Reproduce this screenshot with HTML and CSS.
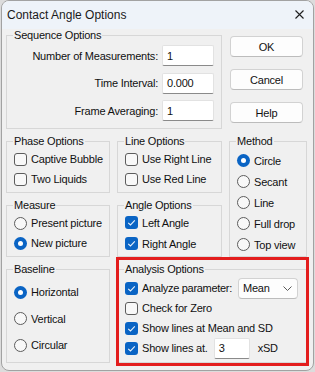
FILE: index.html
```html
<!DOCTYPE html>
<html>
<head>
<meta charset="utf-8">
<link rel="stylesheet" href="styles.css">
</head>
<body>
<div class="window">
  <div class="titlebar">
    <span class="title">Contact Angle Options</span>
    <svg class="close" width="9" height="9" viewBox="0 0 9 9"><path d="M0.5 0.5 L8.5 8.5 M8.5 0.5 L0.5 8.5" stroke="#1f1f1f" stroke-width="1.1" fill="none"/></svg>
  </div>
  <div class="client">
    <div class="group seq">
      <span class="legend">Sequence Options</span>
      <div class="rows seq-rows">
        <div class="field"><span class="flabel">Number of Measurements:</span><span class="edit">1</span></div>
        <div class="field"><span class="flabel">Time Interval:</span><span class="edit">0.000</span></div>
        <div class="field"><span class="flabel">Frame Averaging:</span><span class="edit">1</span></div>
      </div>
    </div>
    <div class="buttons">
      <div class="btn">OK</div>
      <div class="btn">Cancel</div>
      <div class="btn">Help</div>
    </div>
    <div class="group phase">
      <span class="legend">Phase Options</span>
      <div class="rows r20 m2">
        <div class="row"><span class="cb"></span>Captive Bubble</div>
        <div class="row"><span class="cb"></span>Two Liquids</div>
      </div>
    </div>
    <div class="group line">
      <span class="legend">Line Options</span>
      <div class="rows r20 m2">
        <div class="row"><span class="cb"></span>Use Right Line</div>
        <div class="row"><span class="cb"></span>Use Red Line</div>
      </div>
    </div>
    <div class="group method">
      <span class="legend">Method</span>
      <div class="rows r21 m3">
        <div class="row"><span class="rb on"></span>Circle</div>
        <div class="row"><span class="rb"></span>Secant</div>
        <div class="row"><span class="rb"></span>Line</div>
        <div class="row"><span class="rb"></span>Full drop</div>
        <div class="row"><span class="rb"></span>Top view</div>
      </div>
    </div>
    <div class="group measure">
      <span class="legend">Measure</span>
      <div class="rows r20 m2">
        <div class="row"><span class="rb"></span>Present picture</div>
        <div class="row"><span class="rb on"></span>New picture</div>
      </div>
    </div>
    <div class="group angle">
      <span class="legend">Angle Options</span>
      <div class="rows r21 m1">
        <div class="row"><span class="cb on"><svg width="13" height="13" viewBox="0 0 13 13"><path d="M3.2 6.8 L5.5 9 L9.8 4.4" stroke="#e8f1fb" stroke-width="1.1" fill="none"/></svg></span>Left Angle</div>
        <div class="row"><span class="cb on"><svg width="13" height="13" viewBox="0 0 13 13"><path d="M3.2 6.8 L5.5 9 L9.8 4.4" stroke="#e8f1fb" stroke-width="1.1" fill="none"/></svg></span>Right Angle</div>
      </div>
    </div>
    <div class="group baseline">
      <span class="legend">Baseline</span>
      <div class="rows rb26 m4">
        <div class="row"><span class="rb on"></span>Horizontal</div>
        <div class="row"><span class="rb"></span>Vertical</div>
        <div class="row"><span class="rb"></span>Circular</div>
      </div>
    </div>
    <div class="group analysis">
      <span class="legend">Analysis Options</span>
      <div class="rows r20 m3">
        <div class="row"><span class="cb on"><svg width="13" height="13" viewBox="0 0 13 13"><path d="M3.2 6.8 L5.5 9 L9.8 4.4" stroke="#e8f1fb" stroke-width="1.1" fill="none"/></svg></span><span class="tight">Analyze parameter:</span><span class="combo"><span>Mean</span><svg width="9" height="5" viewBox="0 0 9 5"><path d="M0.5 0.5 L4.5 4.5 L8.5 0.5" stroke="#5a5a5a" stroke-width="1" fill="none"/></svg></span></div>
        <div class="row"><span class="cb"></span>Check for Zero</div>
        <div class="row"><span class="cb on"><svg width="13" height="13" viewBox="0 0 13 13"><path d="M3.2 6.8 L5.5 9 L9.8 4.4" stroke="#e8f1fb" stroke-width="1.1" fill="none"/></svg></span>Show lines at Mean and SD</div>
        <div class="row"><span class="cb on"><svg width="13" height="13" viewBox="0 0 13 13"><path d="M3.2 6.8 L5.5 9 L9.8 4.4" stroke="#e8f1fb" stroke-width="1.1" fill="none"/></svg></span>Show lines at.<span class="edit small">3</span><span class="unit">xSD</span></div>
      </div>
    </div>
  </div>
  <div class="highlight"></div>
</div>
</body>
</html>
```
FILE: styles.css
```css
html { background: #dcdcdc; }
body {
  margin: 0;
  font-family: "Liberation Sans", Arial, sans-serif;
  font-size: 11px;
  letter-spacing: -0.2px;
  color: #111;
}
.window {
  position: relative;
  margin-left: 1px;
  width: 313px;
  height: 371px;
  box-sizing: border-box;
  border: 1px solid #a2a2a2;
  border-radius: 8px;
  overflow: hidden;
  background: #f0f0f0;
}
.titlebar {
  height: 27px;
  background: #eef3f9;
  display: flex;
  align-items: center;
  justify-content: space-between;
  padding: 0 9px 1px 5px;
}
.title {
  font-size: 12px;
  letter-spacing: 0;
  color: #1a1a1a;
}
.client {
  display: grid;
  grid-template-columns: 104px 105px 78px;
  grid-template-rows: 94px 52px 52px 94px;
  column-gap: 7px;
  row-gap: 12px;
  padding: 6px 0 0 4px;
  grid-template-areas:
    "seq seq btn"
    "phase line method"
    "measure angle method"
    "base analysis analysis";
}
.seq { grid-area: seq; }
.buttons { grid-area: btn; }
.phase { grid-area: phase; }
.line { grid-area: line; }
.method { grid-area: method; }
.measure { grid-area: measure; }
.angle { grid-area: angle; }
.baseline { grid-area: base; }
.analysis { grid-area: analysis; }

.group {
  border: 1px solid #d7d7d7;
  box-sizing: border-box;
}
.legend {
  display: block;
  width: max-content;
  height: 12px;
  line-height: 12px;
  margin: -7px 0 0 6px;
  padding: 0 1px;
  background: #f0f0f0;
}
.rows {
  display: flex;
  flex-direction: column;
  padding-left: 7px;
}
.m1 { margin-top: 1px; }
.m2 { margin-top: 2px; }
.m3 { margin-top: 3px; }
.m4 { margin-top: 4px; }
.row {
  display: flex;
  align-items: center;
  white-space: nowrap;
}
.r20 .row { height: 20px; }
.r21 .row { height: 21px; }
.rb26 .row { height: 26.5px; }
.tight { letter-spacing: -0.3px; }

.seq-rows {
  margin-top: 1px;
  padding-left: 0;
  padding-right: 7px;
}
.field {
  display: flex;
  align-items: center;
  justify-content: flex-end;
  height: 27.5px;
}
.flabel { margin-right: 4px; }
.edit {
  display: flex;
  align-items: center;
  width: 52px;
  height: 21px;
  box-sizing: border-box;
  padding-left: 4px;
  background: #ffffff;
  border: 1px solid #e2e2e2;
  border-bottom-color: #8a8a8a;
  border-radius: 2px;
}
.edit.small {
  width: 36px;
  margin-left: 6px;
}
.unit { margin-left: 8px; }

.buttons {
  display: flex;
  flex-direction: column;
  gap: 12px;
  padding: 1px 0 0 1px;
}
.btn {
  width: 73px;
  height: 21px;
  box-sizing: border-box;
  background: #fdfdfd;
  border: 1px solid #d2d2d2;
  border-bottom-color: #bcbcbc;
  border-radius: 4px;
  display: flex;
  align-items: center;
  justify-content: center;
}

.cb {
  flex: none;
  width: 13px;
  height: 13px;
  box-sizing: border-box;
  border: 1px solid #5c5c5c;
  border-radius: 3px;
  background: #f8f8f8;
  margin-right: 4px;
}
.cb.on {
  border: none;
  background: #0a64c4;
}
.cb svg { display: block; }
.rb {
  flex: none;
  width: 13px;
  height: 13px;
  box-sizing: border-box;
  border: 1px solid #5c5c5c;
  border-radius: 50%;
  background: #f8f8f8;
  margin-right: 4px;
  display: flex;
  align-items: center;
  justify-content: center;
}
.rb.on {
  border: none;
  background: #0a64c4;
}
.rb.on::after {
  content: "";
  width: 5px;
  height: 5px;
  border-radius: 50%;
  background: #ffffff;
}
.combo {
  display: flex;
  align-items: center;
  justify-content: space-between;
  width: 60px;
  height: 21px;
  box-sizing: border-box;
  margin-left: 6px;
  padding: 0 5px 0 4px;
  background: #fdfdfd;
  border: 1px solid #d2d2d2;
  border-bottom-color: #bcbcbc;
  border-radius: 4px;
  letter-spacing: -0.2px;
}
.combo svg { display: block; }

.highlight {
  position: absolute;
  left: 114px;
  top: 256px;
  width: 193px;
  height: 109px;
  box-sizing: border-box;
  border: 3px solid #e31d1d;
}
```
